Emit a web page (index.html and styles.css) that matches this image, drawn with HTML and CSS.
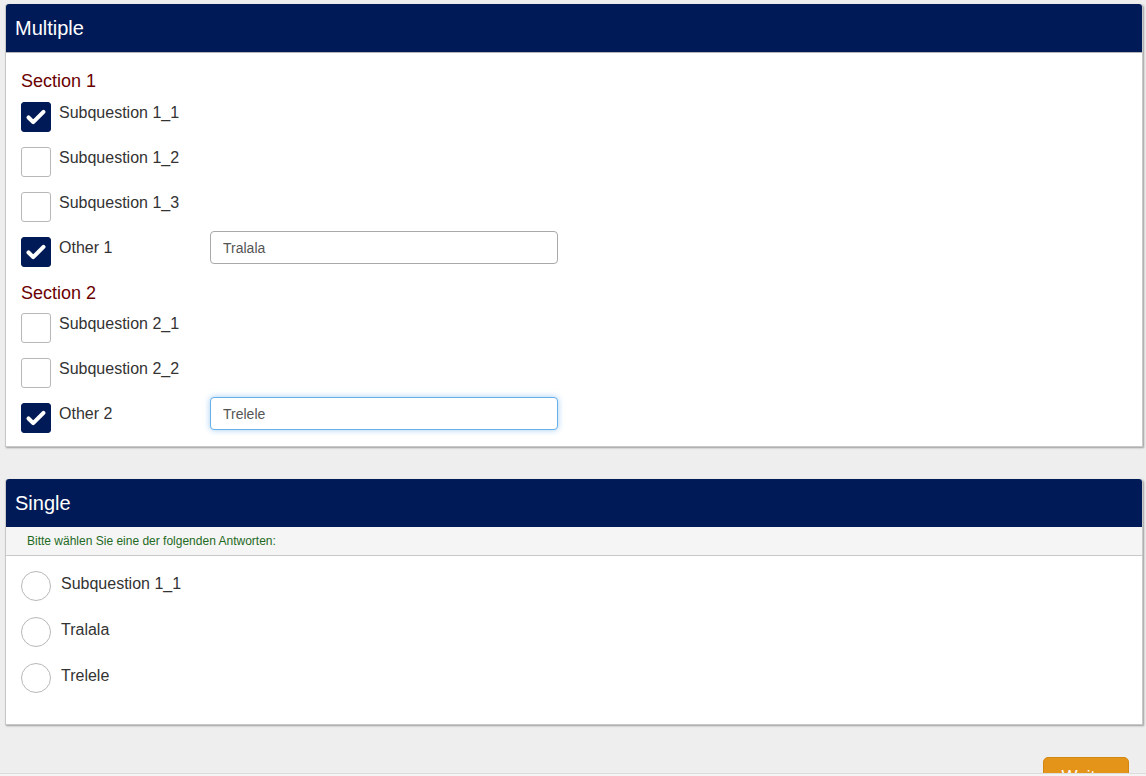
FILE: index.html
```html
<!DOCTYPE html>
<html lang="de">
<head>
    <meta charset="UTF-8">
    <title>Umfrage</title>
    <link rel="stylesheet" href="styles.css">
</head>
<body>
    <div class="frage">
        <div class="kopf">Multiple</div>
        <div class="inhalt">
            <h3 class="abschnitt">Section 1</h3>
            <div class="zeile">
                <span class="box an"><svg viewBox="0 0 30 30"><path d="M7 15.5l5 5 11-11" /></svg></span>
                <span class="text">Subquestion 1_1</span>
            </div>
            <div class="zeile">
                <span class="box"></span>
                <span class="text">Subquestion 1_2</span>
            </div>
            <div class="zeile">
                <span class="box"></span>
                <span class="text">Subquestion 1_3</span>
            </div>
            <div class="zeile">
                <span class="box an"><svg viewBox="0 0 30 30"><path d="M7 15.5l5 5 11-11" /></svg></span>
                <span class="text breit">Other 1</span>
                <input class="anders" type="text" value="Tralala">
            </div>
            <h3 class="abschnitt">Section 2</h3>
            <div class="zeile">
                <span class="box"></span>
                <span class="text">Subquestion 2_1</span>
            </div>
            <div class="zeile">
                <span class="box"></span>
                <span class="text">Subquestion 2_2</span>
            </div>
            <div class="zeile letzte">
                <span class="box an"><svg viewBox="0 0 30 30"><path d="M7 15.5l5 5 11-11" /></svg></span>
                <span class="text breit">Other 2</span>
                <input class="anders fokus" type="text" value="Trelele">
            </div>
        </div>
    </div>

    <div class="frage">
        <div class="kopf">Single</div>
        <div class="hilfe">Bitte wählen Sie eine der folgenden Antworten:</div>
        <div class="inhalt einzel">
            <div class="zeile rund">
                <span class="kreis"></span>
                <span class="text">Subquestion 1_1</span>
            </div>
            <div class="zeile rund">
                <span class="kreis"></span>
                <span class="text">Tralala</span>
            </div>
            <div class="zeile rund">
                <span class="kreis"></span>
                <span class="text">Trelele</span>
            </div>
        </div>
    </div>

    <div class="navigation">
        <button type="button" class="weiter">Weiter</button>
    </div>
    <div class="fuss"></div>
</body>
</html>
```

FILE: styles.css
```css
body{
    margin: 0;
    padding: 4px 3px 0 5px;
    background-color: #eeeeee;
    font-family: "Liberation Sans", Arial, sans-serif;
    color: #333;
}
.frage{
    background-color: white;
    border: 1px solid #c8c8c8;
    border-top: none;
    border-radius: 3px 3px 0 0;
    box-shadow: 1px 1px 2px rgba(0, 0, 0, 0.35);
    margin-bottom: 32px;
}
.kopf{
    background-color: #001a57;
    color: white;
    font-size: 20px;
    height: 48px;
    line-height: 48px;
    padding-left: 9px;
    border-radius: 3px 3px 0 0;
    border-bottom: 1px solid #b5b5b5;
}
.inhalt{
    padding: 16px 15px 13px 15px;
}
.abschnitt{
    margin: 0 0 9px 0;
    font-size: 18px;
    font-weight: normal;
    color: #6b0000;
    line-height: 24px;
}
.zeile + .abschnitt{
    margin-top: -1px;
    margin-bottom: 8px;
}
.zeile{
    display: flex;
    align-items: flex-start;
    height: 45px;
}
.zeile.letzte{
    height: 30px;
}
.box{
    width: 28px;
    height: 28px;
    border: 1px solid #b8b8b8;
    border-radius: 3px;
    margin-right: 8px;
    background-color: white;
    flex: none;
}
.box.an{
    background-color: #001a57;
    border-color: #001a57;
}
.box svg{
    width: 28px;
    height: 28px;
    display: block;
}
.box path{
    fill: none;
    stroke: white;
    stroke-width: 4.4;
    stroke-linecap: round;
    stroke-linejoin: round;
}
.text{
    font-size: 16px;
    line-height: 20px;
    padding-top: 1px;
    color: #333;
}
.text.breit{
    width: 151px;
    flex: none;
}
.anders{
    margin-top: -6px;
    width: 348px;
    height: 33px;
    box-sizing: border-box;
    border: 1px solid #a9a9a9;
    border-radius: 4px;
    padding: 0 12px;
    font-family: "Liberation Sans", Arial, sans-serif;
    font-size: 14px;
    color: #555;
    outline: none;
}
.anders.fokus{
    border-color: #66afe9;
    box-shadow: 0 0 6px rgba(102, 175, 233, 0.6);
}
.hilfe{
    background-color: #f5f5f5;
    color: #1e6a1e;
    font-size: 12px;
    height: 28px;
    line-height: 28px;
    padding-left: 21px;
    border-bottom: 1px solid #c8c8c8;
    margin-top: -1px;
}
.einzel{
    padding: 15px 15px 15px 15px;
}
.zeile.rund{
    height: 46px;
}
.kreis{
    width: 28px;
    height: 28px;
    border: 1px solid #b8b8b8;
    border-radius: 50%;
    margin-right: 10px;
    flex: none;
}
.rund .text{
    padding-top: 3px;
}
.navigation{
    display: flex;
    justify-content: flex-end;
    padding-right: 14px;
}
.weiter{
    background-color: #e49419;
    border: 1px solid #d4870f;
    border-radius: 5px;
    color: white;
    font-family: "Liberation Sans", Arial, sans-serif;
    font-size: 17px;
    width: 86px;
    height: 40px;
}
.fuss{
    position: fixed;
    left: 0;
    right: 0;
    bottom: 0;
    height: 2px;
    background-color: #f4f4f4;
    border-top: 1px solid #dcdcdc;
}
```
